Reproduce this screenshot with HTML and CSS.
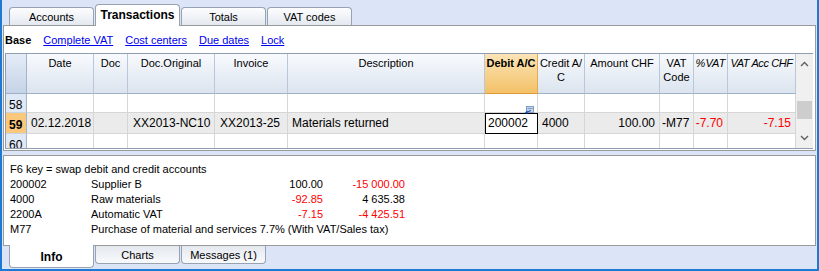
FILE: index.html
```html
<!DOCTYPE html>
<html lang="en">

<head>
    <meta charset="UTF-8">
    <title>Transactions</title>
    <link rel="stylesheet" href="styles.css">
</head>

<body>
    <!-- Table tabs -->
    <div class="tabs top">
        <div class="tab">Accounts</div>
        <div class="tab active">Transactions</div>
        <div class="tab">Totals</div>
        <div class="tab">VAT codes</div>
    </div>

    <div class="panel main">
        <div class="views">
            <b>Base</b>
            <a href="#">Complete VAT</a>
            <a href="#">Cost centers</a>
            <a href="#">Due dates</a>
            <a href="#">Lock</a>
        </div>

        <div class="grid">
            <div class="sheet">
                <div class="row head">
                    <div class="cell corner"></div>
                    <div class="cell">Date</div>
                    <div class="cell">Doc</div>
                    <div class="cell">Doc.Original</div>
                    <div class="cell">Invoice</div>
                    <div class="cell">Description</div>
                    <div class="cell current">Debit A/C</div>
                    <div class="cell">Credit A/<br>C</div>
                    <div class="cell">Amount CHF</div>
                    <div class="cell">VAT<br>Code</div>
                    <div class="cell italic">%VAT</div>
                    <div class="cell italic tight">VAT Acc CHF</div>
                </div>
                <div class="row r58">
                    <div class="cell num">58</div>
                    <div class="cell"></div>
                    <div class="cell"></div>
                    <div class="cell"></div>
                    <div class="cell"></div>
                    <div class="cell"></div>
                    <div class="cell"></div>
                    <div class="cell"></div>
                    <div class="cell"></div>
                    <div class="cell"></div>
                    <div class="cell"></div>
                    <div class="cell"></div>
                </div>
                <div class="row r59 selected">
                    <div class="cell num">59</div>
                    <div class="cell">02.12.2018</div>
                    <div class="cell"></div>
                    <div class="cell pad5">XX2013-NC10</div>
                    <div class="cell pad5">XX2013-25</div>
                    <div class="cell">Materials returned</div>
                    <div class="cell edit">200002
                        <svg class="pick" width="10" height="8" viewBox="0 0 10 8">
                            <rect x="2.5" y="0.5" width="7" height="6" fill="#c9d6ea" stroke="#7f9cc4" />
                            <line x1="3.5" y1="2.5" x2="8.5" y2="2.5" stroke="#7f9cc4" />
                            <path d="M7 4.5 L2 6.5" stroke="#1d5db8" stroke-width="1.3" fill="none" />
                            <path d="M0.5 7 L3.5 4.5 L4 7.5 Z" fill="#1d5db8" />
                        </svg>
                    </div>
                    <div class="cell">4000</div>
                    <div class="cell right">100.00</div>
                    <div class="cell pad3">-M77</div>
                    <div class="cell right neg">-7.70</div>
                    <div class="cell right neg">-7.15</div>
                </div>
                <div class="row r60">
                    <div class="cell num">60</div>
                    <div class="cell"></div>
                    <div class="cell"></div>
                    <div class="cell"></div>
                    <div class="cell"></div>
                    <div class="cell"></div>
                    <div class="cell"></div>
                    <div class="cell"></div>
                    <div class="cell"></div>
                    <div class="cell"></div>
                    <div class="cell"></div>
                    <div class="cell"></div>
                </div>
            </div>

            <div class="scrollbar">
                <svg class="arrow" width="9" height="6" viewBox="0 0 9 6">
                    <polyline points="1,5 4.5,1.5 8,5" fill="none" stroke="#606060" stroke-width="1.4" />
                </svg>
                <div class="track">
                    <div class="thumb"></div>
                </div>
                <svg class="arrow" width="9" height="6" viewBox="0 0 9 6">
                    <polyline points="1,1 4.5,4.5 8,1" fill="none" stroke="#606060" stroke-width="1.4" />
                </svg>
            </div>
        </div>
    </div>

    <!-- Info panel -->
    <div class="panel info">
        <div class="hint">F6 key = swap debit and credit accounts</div>
        <div class="lines">
            <span>200002</span><span>Supplier B</span><span class="amt">100.00</span><span class="amt neg">-15 000.00</span>
            <span>4000</span><span>Raw materials</span><span class="amt neg">-92.85</span><span class="amt">4 635.38</span>
            <span>2200A</span><span>Automatic VAT</span><span class="amt neg">-7.15</span><span class="amt neg">-4 425.51</span>
            <span>M77</span><span class="wide">Purchase of material and services 7.7% (With VAT/Sales tax)</span>
        </div>
    </div>

    <div class="tabs bottom">
        <div class="tab active">Info</div>
        <div class="tab">Charts</div>
        <div class="tab">Messages (1)</div>
    </div>
</body>

</html>
```

FILE: styles.css
```css
body {
    margin: 0;
    width: 815px;
    height: 269px;
    border: solid #1c7ad2;
    border-width: 0 2px 2px 2px;
    background: #dbe5f7;
    font-family: "Liberation Sans", Arial, sans-serif;
    font-size: 11px;
    color: #000;
    display: flex;
    flex-direction: column;
    overflow: hidden;
}

/* Tabs */

.tabs {
    display: flex;
    padding-left: 7px;
}

.tabs.top {
    height: 25px;
    align-items: flex-end;
}

.tabs.bottom {
    height: 23px;
    align-items: flex-start;
}

.tab {
    box-sizing: border-box;
    width: 85px;
    margin-right: 1px;
    border: 1px solid #97a3b1;
    display: flex;
    align-items: center;
    justify-content: center;
}

.tabs.top .tab {
    height: 18px;
    border-bottom: none;
    border-radius: 4px 4px 0 0;
    background: linear-gradient(#fdfdfe, #e4e9f0);
    padding-top: 1px;
}

.tabs.top .tab.active {
    height: 22px;
    margin-bottom: -1px;
    background: #fff;
    font-weight: bold;
    font-size: 12px;
    z-index: 1;
    padding-bottom: 2px;
}

.tabs.bottom .tab {
    height: 18px;
    border-top: none;
    border-radius: 0 0 4px 4px;
    background: linear-gradient(#e4e9f0, #f8f9fb);
}

.tabs.bottom .tab.active {
    height: 23px;
    margin-top: -1px;
    background: #fff;
    font-weight: bold;
    font-size: 12px;
    z-index: 1;
    padding-top: 2px;
}

/* Panels */

.panel {
    margin: 0 1px;
    border: 1px solid #9a9a9a;
    background: #fff;
}

.panel.main {
    height: 124px;
    display: flex;
    flex-direction: column;
}

.views {
    height: 27px;
    display: flex;
    align-items: center;
    gap: 12px;
    padding-left: 1px;
    padding-top: 1px;
    box-sizing: border-box;
}

.views a {
    color: #0000f0;
}

.grid {
    height: 96px;
    box-sizing: border-box;
    margin: 0 2px 0 1px;
    border: 1px solid #8e9db0;
    border-right: none;
    display: flex;
    overflow: hidden;
}

.sheet {
    width: 790px;
    font-size: 12px;
}

.row {
    display: grid;
    grid-template-columns: 21px 67px 34px 87px 73px 197px 53px 47px 75px 34px 34px 68px;
}

.cell {
    box-sizing: border-box;
    border-right: 1px solid #d6d6d6;
    border-bottom: 1px solid #d6d6d6;
    padding: 0 4px;
    display: flex;
    align-items: center;
    white-space: nowrap;
    overflow: hidden;
}

.row.head {
    height: 40px;
    font-size: 11px;
}

.row.head .cell {
    display: block;
    text-align: center;
    line-height: 14px;
    padding: 2px 0 0;
    background: linear-gradient(#f8fafd, #dbe4ef);
    border-right-color: #b8c7da;
    border-bottom-color: #9fb1c7;
}

.row.head .cell.corner {
    background: linear-gradient(#e4ecf8, #c4d3e7);
    border-right-color: #a3b4ca;
}

.row.head .cell.current {
    font-weight: bold;
    background: linear-gradient(#fbe4b6, #f3c168);
    border-right-color: #e8a94a;
    border-bottom-color: #e09a3a;
}

.row.head .cell.italic {
    font-style: italic;
}

.row.head .cell.tight {
    letter-spacing: -0.4px;
}

.r58 {
    height: 19px;
}

.r59 {
    height: 21px;
}

.r60 {
    height: 20px;
}

.row.selected .cell {
    background: #ebebeb;
}

.cell.num {
    background: #dfe8f5;
    border-right-color: #a3b4ca;
    border-bottom-color: #c9d4e3;
    padding: 3px 0 0 3px;
}

.row.selected .cell.num {
    background: #f9c87c;
    font-weight: bold;
}

.cell.pad5 {
    padding-left: 5px;
}

.cell.pad3 {
    padding-left: 2px;
}

.cell.right {
    justify-content: flex-end;
}

.neg {
    color: #ff0000;
}

.row.selected .cell.edit {
    position: relative;
    overflow: visible;
    background: #fff;
    outline: 1px solid #000;
    outline-offset: -1px;
    padding-left: 3px;
}

.pick {
    position: absolute;
    top: -7px;
    right: 3px;
}

/* Scrollbar */

.scrollbar {
    width: 17px;
    background: #f0f0f0;
    display: flex;
    flex-direction: column;
    align-items: center;
}

.arrow {
    margin: 7px 0;
}

.track {
    flex: 1;
    width: 15px;
    position: relative;
}

.thumb {
    width: 15px;
    height: 18px;
    margin-top: 27px;
    background: #cdcdcd;
}

/* Info panel */

.panel.info {
    margin-top: 4px;
    height: 91px;
    box-sizing: border-box;
    padding: 6px 0 0 6px;
    line-height: 15px;
}

.lines {
    display: grid;
    grid-template-columns: 81px 159px 73px 82px;
}

.lines .amt {
    text-align: right;
}

.lines .wide {
    grid-column: 2 / -1;
    white-space: nowrap;
}
```
